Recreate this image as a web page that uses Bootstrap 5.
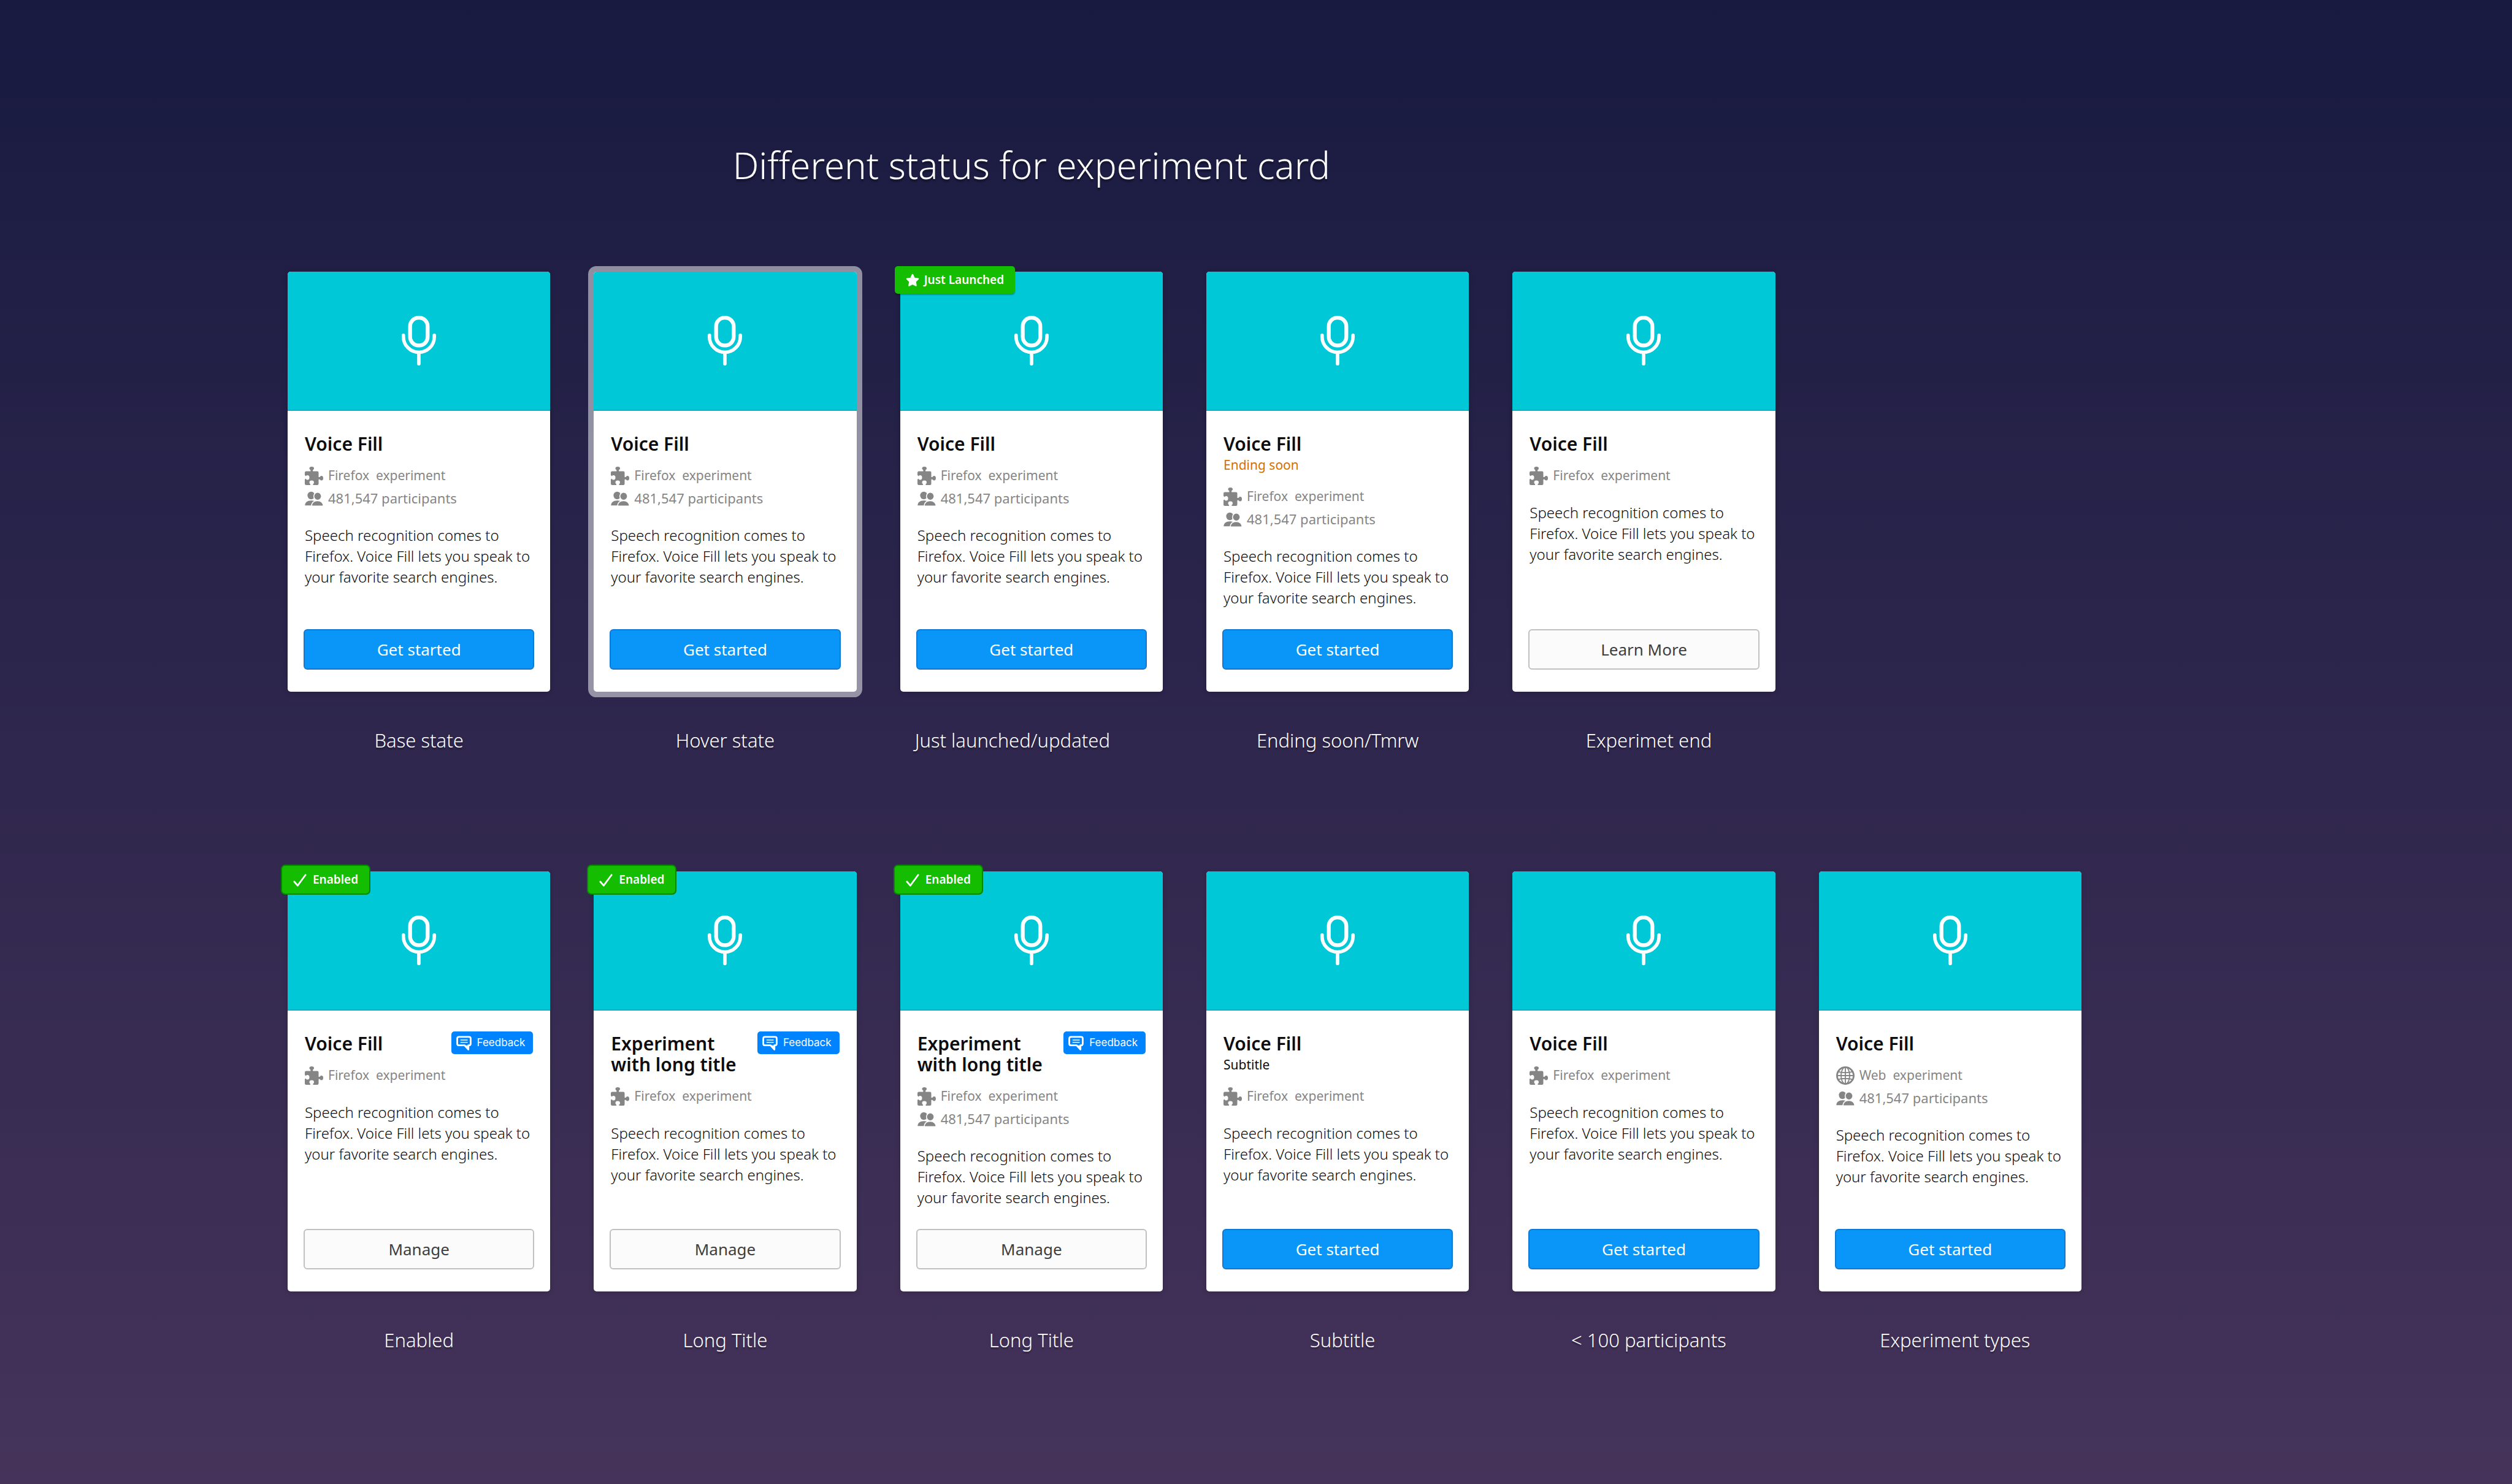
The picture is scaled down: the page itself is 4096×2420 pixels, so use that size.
<!DOCTYPE html>
<html lang="en">
<head>
<meta charset="utf-8">
<meta name="viewport" content="width=device-width, initial-scale=1">
<title>Different status for experiment card</title>
<link href="https://cdn.jsdelivr.net/npm/bootstrap@5.3.0/dist/css/bootstrap.min.css" rel="stylesheet">
<style>
  body { font-family: "Noto Sans", sans-serif; background: linear-gradient(#181a40, #45335a) no-repeat; color: #fff; }
  .board { padding: 228px 702px 90px 469px; }
  .board-title { font-size: 60px; line-height: 82px; font-weight: 300; margin-bottom: 133px; text-shadow: 0 4px 2px rgba(0,0,0,.3); }
  .exp-row { --bs-gutter-x: 71px; }
  .exp-row + .exp-row { margin-top: 193px; }
  .exp-card { border: 0; border-radius: 5px; box-shadow: 0 2px 8px rgba(0,0,0,.16); color: #0c0c0d; }
  .exp-card.is-hovered { box-shadow: 0 0 0 9px rgba(255,255,255,.5); }
  .exp-hero { height: 227px; background: #00c8d7; border-bottom: 2px solid #00b4c5; border-radius: 5px 5px 0 0; }
  .exp-hero svg { width: 56px; height: 81px; }
  .exp-body { padding: 34px 28px 34px; }
  .exp-name { font-size: 30px; line-height: 34px; font-weight: 600; padding-top: 3px; margin: 0; }
  .exp-sub { font-size: 21px; line-height: 34px; margin: 0; }
  .exp-sub.is-ending { color: #d76e00; }
  .exp-facts { margin: 16px 0 25px; font-size: 21px; line-height: 37px; color: #858585; }
  .exp-facts li { display: flex; align-items: center; gap: 8px; }
  .exp-facts .fact-count { font-size: 22px; }
  .exp-facts svg { width: 30px; height: 30px; flex: none; }
  .exp-text { font-size: 24px; line-height: 34px; font-weight: 300; margin: 0 -4px 0 0; }
  .exp-foot { padding: 0 26px 36px; }
  .exp-btn { font-size: 26px; line-height: 38px; padding: 12px; border-width: 2px; border-radius: 6px; }
  .exp-btn.btn-primary { background: #0996f8; border-color: #1278d2; }
  .exp-btn.btn-light { background: #fbfbfb; border-color: #c1c1c1; color: #3e3e3e; }
  .exp-flag { top: -9px; left: -9px; height: 45px; padding: 0 18px; gap: 8px; font-size: 19px; font-weight: 600; color: #fff; background: #14bd00; border-radius: 5px; box-shadow: 0 2px 2px rgba(0,0,0,.25); }
  .exp-flag.is-on { box-shadow: 0 0 0 2px #0a8406; gap: 10px; }
  .exp-flag svg { width: 22px; height: 22px; }
  .exp-feedback { font: 17px/37px Inter, sans-serif; padding: 0 13px 0 8px; gap: 9px; color: #fff; background: #0083ff; border: 0; border-radius: 5px; }
  .exp-feedback svg { width: 25px; height: 24px; }
  .exp-caption { font-size: 31px; line-height: 42px; font-weight: 300; margin: 58px 0 0; text-align: center; text-shadow: 0 3px 2px rgba(0,0,0,.3); }
  @media (max-width: 3200px) { .board { padding: 80px 60px; } }
</style>
</head>
<body class="min-vh-100">
<svg class="d-none" aria-hidden="true">
  <symbol id="i-mic" viewBox="0 0 180 260"><g fill="none" stroke="#fff" stroke-linecap="round"><rect x="44" y="10" width="92" height="145" rx="45" stroke-width="20"/><path d="M9 102v8a81 81 0 0 0 162 0v-8M90 193v58" stroke-width="18"/></g></symbol>
  <symbol id="i-puzzle" viewBox="0 0 96 96"><g fill="#858585"><rect y="24" width="72" height="72" rx="7"/><ellipse cx="36" cy="9" rx="12" ry="9"/><path d="M30 12h12v14H30zM70 54h14v12H70z"/><ellipse cx="87" cy="60" rx="9" ry="12"/></g><g fill="#fff"><ellipse cx="14" cy="57" rx="10" ry="12"/><path d="M0 44l7 7v10l-7 5z"/><ellipse cx="36" cy="82" rx="12" ry="10"/><path d="M31 88h10l3 8H28z"/></g></symbol>
  <symbol id="i-people" viewBox="0 -12 94 96"><g fill="#858585"><ellipse cx="32" cy="20" rx="19" ry="20"/><path d="M0 72c0-16 12-26 32-26 6 0 12 1 16 3v23z"/></g><g fill="#858585" stroke="#fff" stroke-width="5"><ellipse cx="66" cy="24" rx="20" ry="21"/><path d="M34 75c0-16 12-28 31-28s31 12 31 28z"/></g></symbol>
  <symbol id="i-globe" viewBox="0 0 32 32"><g fill="none" stroke="#858585" stroke-width="2"><circle cx="16" cy="16" r="14.5" stroke-width="3"/><ellipse cx="16" cy="16" rx="7.5" ry="14.5"/><path d="M16 2v28M2 16h28M4 9.500q12 3 24 0M4 22.500q12-3 24 0"/></g></symbol>
  <symbol id="i-star" viewBox="0 0 24 24"><path d="M12 2l3 6.500 7 1-5 5 1.200 7L12 18.200 5.800 21.500l1.200-7-5-5 7-1z" fill="#fff" stroke="#fff" stroke-width="2.400" stroke-linejoin="round"/></symbol>
  <symbol id="i-check" viewBox="0 0 24 24"><path d="M2 15l6 7L22 3" fill="none" stroke="#fff" stroke-width="3" stroke-linecap="round" stroke-linejoin="round"/></symbol>
  <symbol id="i-chat" viewBox="0 0 81 76"><path d="M14 5h53q9 0 9 9v27q0 9-9 9h-3v22L44 50H14q-9 0-9-9V14q0-9 9-9z" fill="none" stroke="#fff" stroke-width="9" stroke-linejoin="round"/><path d="M45 50h20v20z" fill="#fff"/><path d="M22 22h38M22 34h38" stroke="#fff" stroke-width="5"/></symbol>
</svg>

<main class="board">
  <div class="row exp-row"><h1 class="col-12 col-xxl-10 text-center board-title">Different status for experiment card</h1></div>

  <div class="row row-cols-1 row-cols-md-3 row-cols-xxl-6 exp-row gy-0 mt-0">
    <section class="col d-flex flex-column">
      <article class="card exp-card flex-grow-1">
        <div class="exp-hero d-flex align-items-center justify-content-center"><svg><use href="#i-mic"/></svg></div>
        <div class="exp-body flex-grow-1">
          <h2 class="exp-name">Voice Fill</h2>
          <ul class="list-unstyled exp-facts"><li><svg><use href="#i-puzzle"/></svg>Firefox&nbsp; experiment</li><li class="fact-count"><svg><use href="#i-people"/></svg>481,547 participants</li></ul>
          <p class="exp-text">Speech recognition comes to<br>Firefox. Voice Fill lets you speak to<br>your favorite search engines.</p>
        </div>
        <div class="exp-foot d-grid"><button type="button" class="btn btn-primary exp-btn">Get started</button></div>
      </article>
      <p class="exp-caption">Base state</p>
    </section>

    <section class="col d-flex flex-column">
      <article class="card exp-card is-hovered flex-grow-1">
        <div class="exp-hero d-flex align-items-center justify-content-center"><svg><use href="#i-mic"/></svg></div>
        <div class="exp-body flex-grow-1">
          <h2 class="exp-name">Voice Fill</h2>
          <ul class="list-unstyled exp-facts"><li><svg><use href="#i-puzzle"/></svg>Firefox&nbsp; experiment</li><li class="fact-count"><svg><use href="#i-people"/></svg>481,547 participants</li></ul>
          <p class="exp-text">Speech recognition comes to<br>Firefox. Voice Fill lets you speak to<br>your favorite search engines.</p>
        </div>
        <div class="exp-foot d-grid"><button type="button" class="btn btn-primary exp-btn">Get started</button></div>
      </article>
      <p class="exp-caption">Hover state</p>
    </section>

    <section class="col d-flex flex-column">
      <article class="card exp-card flex-grow-1">
        <span class="exp-flag position-absolute d-flex align-items-center"><svg><use href="#i-star"/></svg>Just Launched</span>
        <div class="exp-hero d-flex align-items-center justify-content-center"><svg><use href="#i-mic"/></svg></div>
        <div class="exp-body flex-grow-1">
          <h2 class="exp-name">Voice Fill</h2>
          <ul class="list-unstyled exp-facts"><li><svg><use href="#i-puzzle"/></svg>Firefox&nbsp; experiment</li><li class="fact-count"><svg><use href="#i-people"/></svg>481,547 participants</li></ul>
          <p class="exp-text">Speech recognition comes to<br>Firefox. Voice Fill lets you speak to<br>your favorite search engines.</p>
        </div>
        <div class="exp-foot d-grid"><button type="button" class="btn btn-primary exp-btn">Get started</button></div>
      </article>
      <p class="exp-caption text-start px-4">Just launched/updated</p>
    </section>

    <section class="col d-flex flex-column">
      <article class="card exp-card flex-grow-1">
        <div class="exp-hero d-flex align-items-center justify-content-center"><svg><use href="#i-mic"/></svg></div>
        <div class="exp-body flex-grow-1">
          <h2 class="exp-name">Voice Fill</h2>
          <p class="exp-sub is-ending">Ending soon</p>
          <ul class="list-unstyled exp-facts"><li><svg><use href="#i-puzzle"/></svg>Firefox&nbsp; experiment</li><li class="fact-count"><svg><use href="#i-people"/></svg>481,547 participants</li></ul>
          <p class="exp-text">Speech recognition comes to<br>Firefox. Voice Fill lets you speak to<br>your favorite search engines.</p>
        </div>
        <div class="exp-foot d-grid"><button type="button" class="btn btn-primary exp-btn">Get started</button></div>
      </article>
      <p class="exp-caption">Ending soon/Tmrw</p>
    </section>

    <section class="col d-flex flex-column">
      <article class="card exp-card flex-grow-1">
        <div class="exp-hero d-flex align-items-center justify-content-center"><svg><use href="#i-mic"/></svg></div>
        <div class="exp-body flex-grow-1">
          <h2 class="exp-name">Voice Fill</h2>
          <ul class="list-unstyled exp-facts"><li><svg><use href="#i-puzzle"/></svg>Firefox&nbsp; experiment</li></ul>
          <p class="exp-text">Speech recognition comes to<br>Firefox. Voice Fill lets you speak to<br>your favorite search engines.</p>
        </div>
        <div class="exp-foot d-grid"><button type="button" class="btn btn-light exp-btn">Learn More</button></div>
      </article>
      <p class="exp-caption ps-3">Experimet end</p>
    </section>
  </div>

  <div class="row row-cols-1 row-cols-md-3 row-cols-xxl-6 exp-row">
    <section class="col d-flex flex-column">
      <article class="card exp-card flex-grow-1">
        <span class="exp-flag is-on position-absolute d-flex align-items-center"><svg><use href="#i-check"/></svg>Enabled</span>
        <div class="exp-hero d-flex align-items-center justify-content-center"><svg><use href="#i-mic"/></svg></div>
        <div class="exp-body flex-grow-1">
          <div class="d-flex justify-content-between align-items-start"><h2 class="exp-name">Voice Fill</h2><button type="button" class="exp-feedback d-flex align-items-center"><svg><use href="#i-chat"/></svg>Feedback</button></div>
          <ul class="list-unstyled exp-facts"><li><svg><use href="#i-puzzle"/></svg>Firefox&nbsp; experiment</li></ul>
          <p class="exp-text">Speech recognition comes to<br>Firefox. Voice Fill lets you speak to<br>your favorite search engines.</p>
        </div>
        <div class="exp-foot d-grid"><button type="button" class="btn btn-light exp-btn">Manage</button></div>
      </article>
      <p class="exp-caption">Enabled</p>
    </section>

    <section class="col d-flex flex-column">
      <article class="card exp-card flex-grow-1">
        <span class="exp-flag is-on position-absolute d-flex align-items-center"><svg><use href="#i-check"/></svg>Enabled</span>
        <div class="exp-hero d-flex align-items-center justify-content-center"><svg><use href="#i-mic"/></svg></div>
        <div class="exp-body flex-grow-1">
          <div class="d-flex justify-content-between align-items-start"><h2 class="exp-name">Experiment<br>with long title</h2><button type="button" class="exp-feedback d-flex align-items-center"><svg><use href="#i-chat"/></svg>Feedback</button></div>
          <ul class="list-unstyled exp-facts"><li><svg><use href="#i-puzzle"/></svg>Firefox&nbsp; experiment</li></ul>
          <p class="exp-text">Speech recognition comes to<br>Firefox. Voice Fill lets you speak to<br>your favorite search engines.</p>
        </div>
        <div class="exp-foot d-grid"><button type="button" class="btn btn-light exp-btn">Manage</button></div>
      </article>
      <p class="exp-caption">Long Title</p>
    </section>

    <section class="col d-flex flex-column">
      <article class="card exp-card flex-grow-1">
        <span class="exp-flag is-on position-absolute d-flex align-items-center"><svg><use href="#i-check"/></svg>Enabled</span>
        <div class="exp-hero d-flex align-items-center justify-content-center"><svg><use href="#i-mic"/></svg></div>
        <div class="exp-body flex-grow-1">
          <div class="d-flex justify-content-between align-items-start"><h2 class="exp-name">Experiment<br>with long title</h2><button type="button" class="exp-feedback d-flex align-items-center"><svg><use href="#i-chat"/></svg>Feedback</button></div>
          <ul class="list-unstyled exp-facts"><li><svg><use href="#i-puzzle"/></svg>Firefox&nbsp; experiment</li><li class="fact-count"><svg><use href="#i-people"/></svg>481,547 participants</li></ul>
          <p class="exp-text">Speech recognition comes to<br>Firefox. Voice Fill lets you speak to<br>your favorite search engines.</p>
        </div>
        <div class="exp-foot d-grid"><button type="button" class="btn btn-light exp-btn">Manage</button></div>
      </article>
      <p class="exp-caption">Long Title</p>
    </section>

    <section class="col d-flex flex-column">
      <article class="card exp-card flex-grow-1">
        <div class="exp-hero d-flex align-items-center justify-content-center"><svg><use href="#i-mic"/></svg></div>
        <div class="exp-body flex-grow-1">
          <h2 class="exp-name">Voice Fill</h2>
          <p class="exp-sub">Subtitle</p>
          <ul class="list-unstyled exp-facts"><li><svg><use href="#i-puzzle"/></svg>Firefox&nbsp; experiment</li></ul>
          <p class="exp-text">Speech recognition comes to<br>Firefox. Voice Fill lets you speak to<br>your favorite search engines.</p>
        </div>
        <div class="exp-foot d-grid"><button type="button" class="btn btn-primary exp-btn">Get started</button></div>
      </article>
      <p class="exp-caption ps-3">Subtitle</p>
    </section>

    <section class="col d-flex flex-column">
      <article class="card exp-card flex-grow-1">
        <div class="exp-hero d-flex align-items-center justify-content-center"><svg><use href="#i-mic"/></svg></div>
        <div class="exp-body flex-grow-1">
          <h2 class="exp-name">Voice Fill</h2>
          <ul class="list-unstyled exp-facts"><li><svg><use href="#i-puzzle"/></svg>Firefox&nbsp; experiment</li></ul>
          <p class="exp-text">Speech recognition comes to<br>Firefox. Voice Fill lets you speak to<br>your favorite search engines.</p>
        </div>
        <div class="exp-foot d-grid"><button type="button" class="btn btn-primary exp-btn">Get started</button></div>
      </article>
      <p class="exp-caption ps-3">&lt; 100 participants</p>
    </section>

    <section class="col d-flex flex-column">
      <article class="card exp-card flex-grow-1">
        <div class="exp-hero d-flex align-items-center justify-content-center"><svg><use href="#i-mic"/></svg></div>
        <div class="exp-body flex-grow-1">
          <h2 class="exp-name">Voice Fill</h2>
          <ul class="list-unstyled exp-facts"><li><svg><use href="#i-globe"/></svg>Web&nbsp; experiment</li><li class="fact-count"><svg><use href="#i-people"/></svg>481,547 participants</li></ul>
          <p class="exp-text">Speech recognition comes to<br>Firefox. Voice Fill lets you speak to<br>your favorite search engines.</p>
        </div>
        <div class="exp-foot d-grid"><button type="button" class="btn btn-primary exp-btn">Get started</button></div>
      </article>
      <p class="exp-caption ps-3">Experiment types</p>
    </section>
  </div>
</main>
<script src="https://cdn.jsdelivr.net/npm/bootstrap@5.3.0/dist/js/bootstrap.bundle.min.js"></script>
</body>
</html>
